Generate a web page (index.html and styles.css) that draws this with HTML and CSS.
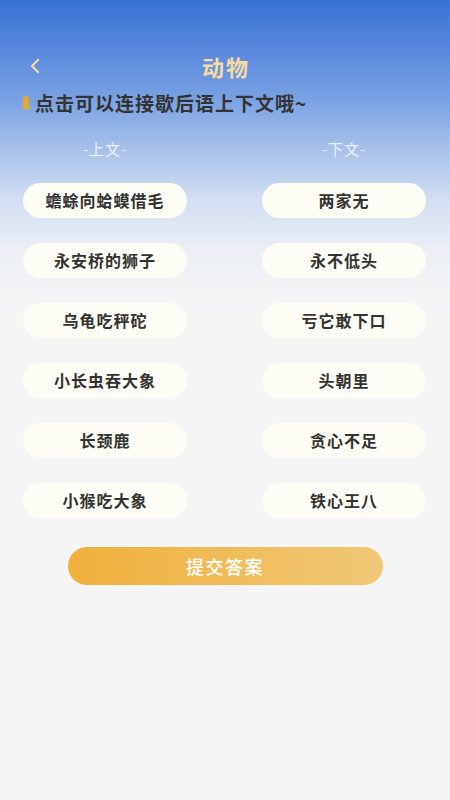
FILE: index.html
```html
<!DOCTYPE html>
<html lang="zh">
<head>
<meta charset="utf-8">
<link rel="stylesheet" href="styles.css">
</head>
<body>
<div class="page">
  <header class="nav">
    <span class="back"><svg width="14" height="16" viewBox="0 0 14 16"><path d="M10 2 L4 8 L10 14" fill="none" stroke="#f6dca2" stroke-width="2.2" stroke-linecap="round" stroke-linejoin="round"/></svg></span>
    <h1 class="title">动物</h1>
  </header>
  <div class="tip"><span class="bar"></span>点击可以连接歇后语上下文哦~</div>
  <div class="cols">
    <div class="col">
      <div class="head">-上文-</div>
      <div class="pill">蟾蜍向蛤蟆借毛</div>
      <div class="pill">永安桥的狮子</div>
      <div class="pill">乌龟吃秤砣</div>
      <div class="pill">小长虫吞大象</div>
      <div class="pill">长颈鹿</div>
      <div class="pill">小猴吃大象</div>
    </div>
    <div class="col">
      <div class="head">-下文-</div>
      <div class="pill">两家无</div>
      <div class="pill">永不低头</div>
      <div class="pill">亏它敢下口</div>
      <div class="pill">头朝里</div>
      <div class="pill">贪心不足</div>
      <div class="pill">铁心王八</div>
    </div>
  </div>
  <div class="submit-wrap"><button class="submit">提交答案</button></div>
</div>
</body>
</html>
```
FILE: styles.css
```css
html, body { margin: 0; padding: 0; }
body {
  width: 450px;
  height: 800px;
  overflow: hidden;
  font-family: "Noto Sans CJK SC", "Noto Sans", sans-serif;
  background: #f5f5f5;
}
.page {
  height: 800px;
  padding-top: 44px;
  box-sizing: border-box;
  background: linear-gradient(180deg, #3672d2 0px, #5686dc 45px, #7aa2e3 100px, #a9c1ea 150px, #d3dff2 200px, #ebeff5 250px, #f4f5f6 300px, #f5f5f5 340px);
}
.nav {
  height: 44px;
  position: relative;
  display: flex;
  align-items: center;
  justify-content: center;
}
.back {
  position: absolute;
  left: 28px;
  top: 14px;
  width: 14px;
  height: 16px;
  display: flex;
}
.title {
  margin: 0;
  font-size: 22px;
  line-height: 30px;
  font-weight: 700;
  color: #f6dca2;
  letter-spacing: 2px;
  padding-left: 2px;
}
.tip {
  margin-top: 5px;
  margin-left: 23px;
  display: flex;
  align-items: center;
  font-size: 19px;
  font-weight: 700;
  color: #333;
  line-height: 20px;
  letter-spacing: 1px;
}
.bar {
  width: 6px;
  height: 14px;
  border-radius: 3px;
  background: #e7aa2c;
  margin-right: 6px;
}
.cols {
  display: flex;
  justify-content: space-between;
  padding: 0 24px 0 23px;
  margin-top: 26px;
}
.col {
  width: 164px;
  display: flex;
  flex-direction: column;
  align-items: center;
  gap: 25px;
}
.head {
  font-size: 15px;
  color: #eef2fa;
  line-height: 20px;
  letter-spacing: 1px;
  margin-bottom: -1px;
}
.pill {
  width: 164px;
  height: 35px;
  box-sizing: border-box;
  padding-bottom: 2px;
  border-radius: 18px;
  background: #fefdf5;
  display: flex;
  align-items: center;
  justify-content: center;
  font-size: 16px;
  font-weight: 700;
  color: #333;
  letter-spacing: 1px;
}
.submit-wrap {
  display: flex;
  justify-content: center;
  margin-top: 29px;
}
.submit {
  width: 315px;
  height: 38px;
  padding-bottom: 2px;
  border: none;
  border-radius: 19px;
  background: linear-gradient(90deg, #f0b03b, #f0c878);
  color: #fff;
  font-family: "Noto Sans CJK SC", sans-serif;
  font-size: 18px;
  font-weight: 500;
  letter-spacing: 1.5px;
}
```
